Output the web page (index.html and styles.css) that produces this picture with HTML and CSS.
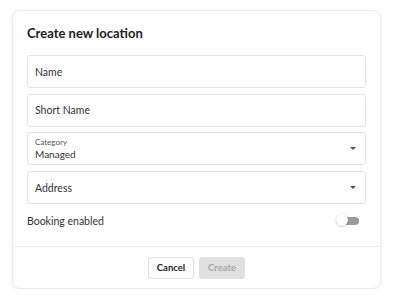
FILE: index.html
```html
<!DOCTYPE html>
<html>
<head>
<meta charset="utf-8">
<link rel="stylesheet" href="styles.css">
</head>
<body>
<div class="card">
  <div class="body">
    <h1 class="title">Create new location</h1>
    <div class="fields">
      <div class="field"><span class="ph">Name</span></div>
      <div class="field"><span class="ph">Short Name</span></div>
      <div class="field select">
        <div class="stack">
          <span class="lbl">Category</span>
          <span class="val">Managed</span>
        </div>
        <span class="arrow"></span>
      </div>
      <div class="field select">
        <span class="ph">Address</span>
        <span class="arrow"></span>
      </div>
    </div>
    <div class="toggle-row">
      <span class="ph">Booking enabled</span>
      <span class="switch"><span class="track"></span><span class="thumb"></span></span>
    </div>
  </div>
  <div class="footer">
    <button class="btn cancel">Cancel</button>
    <button class="btn create" disabled>Create</button>
  </div>
</div>
</body>
</html>
```
FILE: styles.css
```css
html, body { margin: 0; padding: 0; background: #fff; }
body { font-family: Lato, "Noto Sans", sans-serif; color: #333; }
.card {
  margin: 10px 0 0 12px;
  width: 367px;
  height: 277px;
  border: 1px solid #ebebeb;
  border-radius: 8px;
  box-shadow: 0 1px 5px rgba(0,0,0,0.07);
  display: flex;
  flex-direction: column;
}
.body { padding: 0 14px 0 14px; flex: 1; }
.title {
  margin: 0;
  padding-top: 14px;
  height: 30px;
  line-height: 16px;
  font-size: 13px;
  font-weight: 700;
  color: #222;
}
.fields { display: flex; flex-direction: column; gap: 5.7px; }
.field {
  height: 31px;
  border: 1px solid #e4e4e4;
  border-radius: 3px;
  display: flex;
  align-items: center;
  padding: 0 7px;
}
.select { justify-content: space-between; padding-right: 9px; }
.ph { font-size: 10.5px; color: #333; }
.stack { display: flex; flex-direction: column; }
.lbl { font-size: 8px; color: #555; line-height: 11px; margin-top: 1px; }
.val { font-size: 10px; color: #333; line-height: 13px; }
.arrow {
  width: 0; height: 0;
  border-left: 3px solid transparent;
  border-right: 3px solid transparent;
  border-top: 3px solid #555;
}
.toggle-row {
  height: 33px;
  display: flex;
  align-items: center;
  justify-content: space-between;
  padding-right: 7px;
}
.switch { position: relative; width: 23px; height: 13px; }
.track {
  position: absolute; left: 3px; top: 2.5px;
  width: 20px; height: 8px; border-radius: 4px; background: #9a9a9a;
}
.thumb {
  position: absolute; left: 0; top: 0;
  width: 12px; height: 12px; border-radius: 50%;
  background: #fff; box-shadow: 0 0.5px 2px rgba(0,0,0,0.3);
}
.footer {
  height: 41px;
  border-top: 1px solid #ececec;
  display: flex;
  align-items: center;
  justify-content: center;
  gap: 5px;
}
.btn {
  height: 22px;
  width: 46px;
  border-radius: 3px;
  font-family: Lato, "Noto Sans", sans-serif;
  font-size: 9.5px;
  font-weight: 700;
  padding: 0;
}
.cancel { background: #fff; border: 1px solid #e0e0e0; color: #222; }
.create { background: #e0e0e0; border: 1px solid #e0e0e0; color: #a8a8a8; }
```
